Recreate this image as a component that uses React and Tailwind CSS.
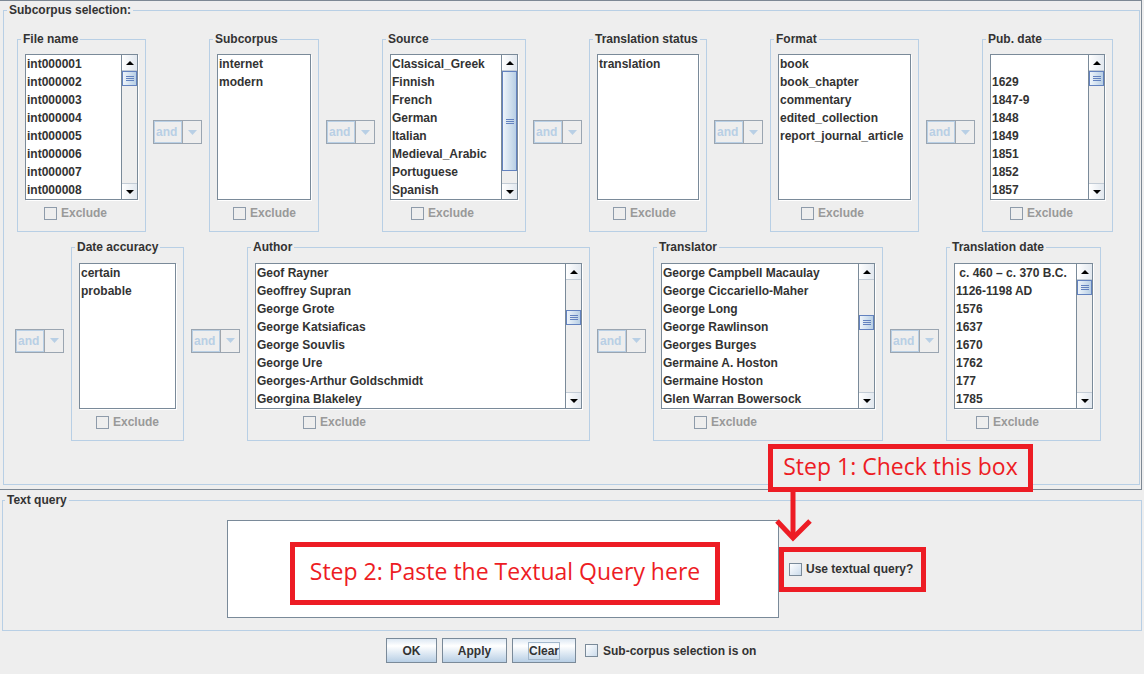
import React from 'react'

const ROW1 = [
  { title: 'File name', w: 'w-[129px]', ex: 'ml-[19px]', scroll: { top: 0, h: 15 },
    items: ['int000001', 'int000002', 'int000003', 'int000004', 'int000005', 'int000006', 'int000007', 'int000008'] },
  { title: 'Subcorpus', w: 'w-[110px]', ex: 'ml-[16px]', items: ['internet', 'modern'] },
  { title: 'Source', w: 'w-[144px]', ex: 'ml-[21px]', scroll: { top: 0, h: 100 },
    items: ['Classical_Greek', 'Finnish', 'French', 'German', 'Italian', 'Medieval_Arabic', 'Portuguese', 'Spanish'] },
  { title: 'Translation status', w: 'w-[118px]', ex: 'ml-[16px]', items: ['translation'] },
  { title: 'Format', w: 'w-[149px]', ex: 'ml-[23px]',
    items: ['book', 'book_chapter', 'commentary', 'edited_collection', 'report_journal_article'] },
  { title: 'Pub. date', w: 'w-[131px]', ex: 'ml-[20px]', scroll: { top: 0, h: 15 },
    items: ['', '1629', '1847-9', '1848', '1849', '1851', '1852', '1857'] },
]

const ROW2 = [
  { title: 'Date accuracy', w: 'w-[113px]', ex: 'ml-[17px]', items: ['certain', 'probable'] },
  { title: 'Author', w: 'w-[343px]', ex: 'ml-[48px]', scroll: { top: 30, h: 15 },
    items: ['Geof Rayner', 'Geoffrey Supran', 'George Grote', 'George Katsiaficas', 'George Souvlis', 'George Ure', 'Georges-Arthur Goldschmidt', 'Georgina Blakeley'] },
  { title: 'Translator', w: 'w-[230px]', ex: 'ml-[33px]', scroll: { top: 35, h: 15 },
    items: ['George Campbell Macaulay', 'George Ciccariello-Maher', 'George Long', 'George Rawlinson', 'Georges Burges', 'Germaine A. Hoston', 'Germaine Hoston', 'Glen Warran Bowersock'] },
  { title: 'Translation date', w: 'w-[155px]', ex: 'ml-[22px]', scroll: { top: 0, h: 15 },
    items: [' c. 460 – c. 370 B.C.', '1126-1198 AD', '1576', '1637', '1670', '1762', '177', '1785'] },
]

function ArrowBtn({ up }) {
  return (
    <div className={`flex h-[16px] shrink-0 items-center justify-center bg-linear-to-r from-white to-[#e2e8ef] ${up ? 'border-b border-[#c3ccd6]' : 'border-t border-[#c3ccd6]'}`}>
      <svg width="8" height="4" viewBox="0 0 8 4">
        <polygon points={up ? '0,4 4,0 8,4' : '0,0 8,0 4,4'} fill="#000" />
      </svg>
    </div>
  )
}

function ScrollBar({ top, h }) {
  return (
    <div className="flex w-[16px] shrink-0 flex-col border-l border-[#7a8a99] bg-[#eeeeee]">
      <ArrowBtn up />
      <div className="flex flex-1 flex-col">
        <div style={{ height: top }} />
        <div
          className="flex flex-col items-center justify-center gap-[1px] border border-[#6382bf] bg-linear-to-r from-[#eef4fa] to-[#b8cfe5]"
          style={{ height: h }}
        >
          <span className="h-px w-[8px] bg-[#6382bf]" />
          <span className="h-px w-[8px] bg-[#6382bf]" />
          <span className="h-px w-[8px] bg-[#6382bf]" />
        </div>
      </div>
      <ArrowBtn />
    </div>
  )
}

function ListBox({ items, scroll }) {
  return (
    <div className="flex h-[146px] border border-[#7a8a99] bg-white shadow-[1px_1px_0_#ffffff]">
      <div className="flex flex-1 flex-col overflow-hidden">
        {items.map((t, i) => (
          <div key={i} className="h-[18px] shrink-0 whitespace-pre pl-[1px] leading-[18px]">{t}</div>
        ))}
      </div>
      {scroll && <ScrollBar top={scroll.top} h={scroll.h} />}
    </div>
  )
}

function Check({ disabled }) {
  return disabled
    ? <span className="h-[13px] w-[13px] shrink-0 border border-[#8e9baa] bg-[#eeeeee]" />
    : <span className="h-[13px] w-[13px] shrink-0 border border-[#7a8a99] bg-linear-to-br from-white to-[#ccdcec]" />
}

function Panel({ p, pt }) {
  return (
    <fieldset className={`${p.w} shrink-0 border border-[#b8cfe5]`}>
      <legend className="ml-[3px] px-[2px] leading-[14px]">{p.title}</legend>
      <div className={`px-[7px] pb-[11px] ${pt}`}>
        <ListBox items={p.items} scroll={p.scroll} />
        <div className={`mt-[7px] flex h-[13px] items-center gap-[4px] leading-[13px] ${p.ex}`}>
          <Check disabled />
          <span className="text-[#999999]">Exclude</span>
        </div>
      </div>
    </fieldset>
  )
}

function AndCombo() {
  return (
    <div className="flex h-[24px] w-[49px] shrink-0 border border-[#9aa5b1]">
      <div className="flex w-[28px] items-center border border-[#b8cfe5] pl-[1px] text-[#b8cfe5]">and</div>
      <div className="flex flex-1 items-center justify-center border-l border-[#a0a6ad]">
        <svg width="9" height="5" viewBox="0 0 9 5">
          <polygon points="0,0 9,0 4.5,5" fill="#b8cfe5" />
        </svg>
      </div>
    </div>
  )
}

function Row({ panels, pt, className }) {
  return (
    <div className={`flex items-center gap-[7px] ${className}`}>
      {panels.map((p) => (
        <React.Fragment key={p.title}>
          <Panel p={p} pt={pt} />
          {p !== panels[panels.length - 1] && <AndCombo />}
        </React.Fragment>
      ))}
    </div>
  )
}

function Btn({ w, children, focus }) {
  return (
    <div className={`flex h-[25px] ${w} items-center justify-center border border-[#7a8a99] bg-linear-to-b from-[#dde8f3] via-white via-30% to-[#b8cfe5]`}>
      {focus ? <span className="border border-[#a3b8cc] leading-[16px]">{children}</span> : children}
    </div>
  )
}

export default function App() {
  return (
    <div className="relative h-[674px] w-[1144px] overflow-hidden bg-[#eeeeee] font-['Liberation_Sans',Arial,sans-serif] text-[12px] font-bold text-[#333333]">
      {/* subcorpus selection */}
      <div className="h-[490px] w-[1142px] border-t border-r border-b border-[#7d8894] pl-[3px] pt-[2px]">
        <fieldset className="w-[1137px] border border-[#b8cfe5] pb-[43px]">
          <legend className="ml-[3px] px-[2px] leading-[14px]">Subcorpus selection:</legend>
          <Row panels={ROW1} pt="pt-[8px]" className="pl-[13px] pt-[15px]" />
          <div className="mt-[8px] flex items-center gap-[7px] pl-[11px]">
            <AndCombo />
            <Row panels={ROW2} pt="pt-[9px]" />
          </div>
        </fieldset>
      </div>

      {/* text query */}
      <fieldset className="ml-[2px] mt-[3px] w-[1140px] border border-[#b8cfe5]">
        <legend className="ml-[2px] px-[2px] leading-[14px]">Text query</legend>
        <div className="flex items-center pb-[12px] pl-[224px] pt-[13px]">
          <div className="h-[98px] w-[552px] shrink-0 border border-[#7a8a99] bg-white pl-[62px] pt-[21px]">
            <div className="flex h-[63px] w-[430px] items-center justify-center border-[5px] border-[#ed1c24] pb-[4px] font-['Open_Sans',sans-serif] text-[23px] font-normal text-[#ed1c24]">
              Step 2: Paste the Textual Query here
            </div>
          </div>
          <div className="flex h-[45px] w-[147px] shrink-0 items-center gap-[4px] border-[5px] border-[#ed1c24] pl-[5px]">
            <Check />
            <span>Use textual query?</span>
          </div>
        </div>
      </fieldset>

      {/* buttons */}
      <div className="mt-[7px] flex items-center gap-[5px] pl-[386px]">
        <Btn w="w-[51px]">OK</Btn>
        <Btn w="w-[65px]">Apply</Btn>
        <Btn w="w-[64px]" focus>Clear</Btn>
        <div className="ml-[4px] flex items-center gap-[5px]">
          <Check />
          <span>Sub-corpus selection is on</span>
        </div>
      </div>

      {/* annotation overlay */}
      <div className="absolute left-[768px] top-[444px] flex h-[48px] w-[265px] items-center justify-center border-[5px] border-[#ed1c24] bg-[#eeeeee] pb-[4px] font-['Open_Sans',sans-serif] text-[23px] font-normal text-[#ed1c24]">
        Step 1: Check this box
      </div>
      <svg className="absolute left-[770px] top-[490px]" width="46" height="54" viewBox="0 0 46 54">
        <line x1="23" y1="0" x2="23" y2="47" stroke="#ed1c24" strokeWidth="5" />
        <polyline points="7,31 23,48 40,31" fill="none" stroke="#ed1c24" strokeWidth="5" />
      </svg>
    </div>
  )
}
